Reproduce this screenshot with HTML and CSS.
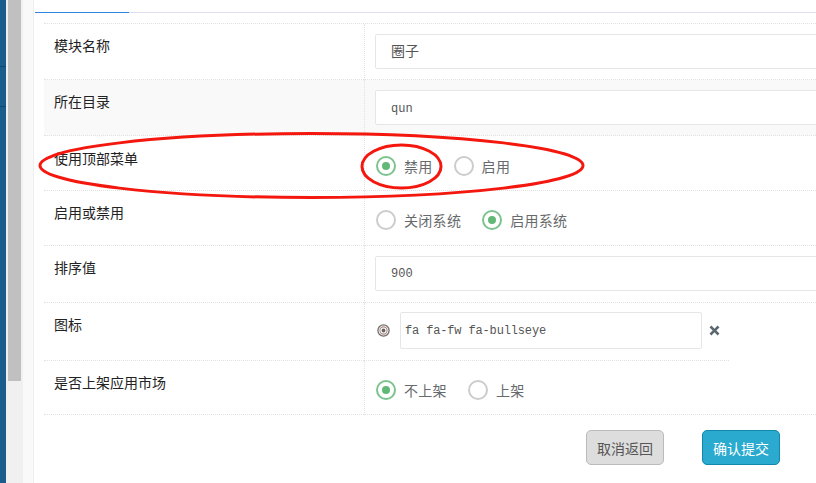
FILE: index.html
```html
<!DOCTYPE html>
<html lang="zh-CN">
<head>
    <meta charset="UTF-8">
    <meta name="viewport" content="width=device-width, initial-scale=1.0">
    <title>模块设置</title>
    <link rel="stylesheet" href="styles.css">
</head>
<body>
    <div class="page">
        <div class="sidebar">
            <div class="nav-strip">
                <div class="nav-item nav-item-first"></div>
                <div class="nav-item nav-item-second"></div>
            </div>
            <div class="scrollbar"><div class="scroll-thumb"></div></div>
        </div>
        <div class="gutter"></div>
        <div class="main">
            <div class="tabs"><div class="tab-active"></div></div>
            <form class="form-table">
                <div class="row row-1">
                    <div class="row-label">模块名称</div>
                    <div class="row-field"><input class="text-input text-input-cjk" type="text" value="圈子"></div>
                </div>
                <div class="row row-2 row-shaded">
                    <div class="row-label">所在目录</div>
                    <div class="row-field"><input class="text-input text-input-low" type="text" value="qun"></div>
                </div>
                <div class="row row-3">
                    <div class="row-label">使用顶部菜单</div>
                    <div class="row-field radios">
                        <label class="radio"><span class="radio-mark checked"></span>禁用</label>
                        <label class="radio"><span class="radio-mark"></span>启用</label>
                    </div>
                </div>
                <div class="row row-4">
                    <div class="row-label">启用或禁用</div>
                    <div class="row-field radios">
                        <label class="radio"><span class="radio-mark"></span>关闭系统</label>
                        <label class="radio"><span class="radio-mark checked"></span>启用系统</label>
                    </div>
                </div>
                <div class="row row-5">
                    <div class="row-label">排序值</div>
                    <div class="row-field"><input class="text-input" type="text" value="900"></div>
                </div>
                <div class="row row-6">
                    <div class="row-label">图标</div>
                    <div class="row-field icon-field">
                        <svg class="icon-preview" viewBox="0 0 13 13" width="13" height="13">
                            <circle cx="6.5" cy="6.5" r="5.6" fill="none" stroke="#6f6f6f" stroke-width="1.3"/>
                            <circle cx="6.5" cy="6.5" r="3.6" fill="none" stroke="#b08a80" stroke-width="1.1"/>
                            <circle cx="6.5" cy="6.5" r="1.9" fill="#666"/>
                        </svg>
                        <input class="text-input icon-input" type="text" value="fa fa-fw fa-bullseye">
                        <svg class="icon-clear" viewBox="0 0 12 12" width="11" height="11">
                            <path d="M2.6 0.6 L6 4 L9.4 0.6 L11.4 2.6 L8 6 L11.4 9.4 L9.4 11.4 L6 8 L2.6 11.4 L0.6 9.4 L4 6 L0.6 2.6 Z" fill="#5a6670"/>
                        </svg>
                    </div>
                </div>
                <div class="row row-7">
                    <div class="row-label">是否上架应用市场</div>
                    <div class="row-field radios">
                        <label class="radio"><span class="radio-mark checked"></span>不上架</label>
                        <label class="radio"><span class="radio-mark"></span>上架</label>
                    </div>
                </div>
                <div class="actions">
                    <button class="btn btn-cancel" type="button">取消返回</button>
                    <button class="btn btn-submit" type="submit">确认提交</button>
                </div>
            </form>
        </div>
        <!-- 截图上的红圈标注 -->
        <svg class="markup" viewBox="0 0 816 483" width="816" height="483">
            <ellipse cx="311.5" cy="165.5" rx="271.5" ry="32" fill="none" stroke="#f4170e" stroke-width="3"/>
            <ellipse cx="401.5" cy="166.5" rx="39.5" ry="21.5" fill="none" stroke="#f4170e" stroke-width="3"/>
        </svg>
    </div>
</body>
</html>
```

FILE: styles.css
```css
* {
    box-sizing: border-box;
}
html, body {
    margin: 0;
    padding: 0;
    height: 100%;
    overflow: hidden;
}
body {
    font-family: "Liberation Sans", "Noto Sans CJK SC", sans-serif;
    font-size: 14px;
    background-color: #fff;
}
.page {
    position: relative;
    display: flex;
    width: 816px;
    height: 483px;
    overflow: hidden;
}
.sidebar {
    display: flex;
    flex: none;
    width: 23px;
}
.nav-strip {
    width: 6px;
    background-color: #1a5c8c;
}
.nav-item {
    border-bottom: 1px solid #12476f;
}
.nav-item-first {
    height: 67px;
}
.nav-item-second {
    height: 40px;
}
.scrollbar {
    flex: 1;
    padding-left: 2px;
    background-color: #f0f0f0;
}
.scroll-thumb {
    width: 13px;
    height: 381px;
    background-color: #c0c0c0;
}
.gutter {
    flex: none;
    width: 11px;
    background-color: #f9f9f9;
    border-right: 1px solid #eee;
}
.main {
    flex: none;
    width: 900px;
    padding-left: 1px;
}
.tabs {
    height: 13px;
    border-bottom: 1px solid #dde;
}
.tab-active {
    width: 94px;
    height: 13px;
    border-bottom: 1px solid #2f86e0;
}
.form-table {
    margin: 10px 0 0 9px;
    border-top: 1px dotted #e2e2e2;
}
.row {
    display: flex;
}
.row-shaded {
    background-color: #f9f9f9;
}
.row-1 { height: 56px; }
.row-2 { height: 56px; }
.row-3 { height: 55px; }
.row-4 { height: 55px; }
.row-5 { height: 57px; }
.row-6 { height: 58px; }
.row-7 { height: 54px; }
.row-label {
    flex: none;
    width: 320px;
    padding: 13px 0 0 10px;
    color: #222;
    line-height: 18px;
    border-bottom: 1px dotted #e2e2e2;
}
.row-3 .row-label {
    padding-top: 14px;
}
.row-field {
    flex: 1;
    padding: 10px 0 0 10px;
    border-left: 1px dotted #e2e2e2;
    border-bottom: 1px dotted #e2e2e2;
}
.text-input {
    display: block;
    width: 520px;
    height: 35px;
    padding: 0 15px;
    font-family: "Liberation Mono", "Noto Sans CJK SC", monospace;
    font-size: 12px;
    color: #555;
    background-color: #fff;
    border: 1px solid #e5e6e7;
    border-radius: 2px;
    outline: none;
}
.text-input-cjk {
    padding-bottom: 3px;
    font-size: 14px;
}
.text-input-low {
    padding-top: 3px;
}
.radios {
    display: flex;
    align-items: center;
    gap: 21px;
    padding-top: 4px;
    padding-left: 11px;
}
.row-3 .radios {
    padding-top: 5px;
}
.radio {
    display: flex;
    align-items: center;
    gap: 8px;
    color: #676a6c;
    letter-spacing: 0.3px;
}
.radio-mark {
    position: relative;
    width: 20px;
    height: 20px;
    background-color: #fff;
    border: 2px solid #ccc;
    border-radius: 50%;
}
.radio-mark.checked {
    border-color: #7cc48f;
}
.radio-mark.checked::after {
    content: "";
    position: absolute;
    top: 4px;
    left: 4px;
    width: 8px;
    height: 8px;
    background-color: #62b977;
    border-radius: 50%;
}
.icon-field {
    flex: none;
    display: flex;
    align-items: flex-start;
    width: 365px;
    padding-top: 9px;
}
.icon-preview {
    flex: none;
    margin: 12px 10px 0 2px;
}
.icon-input {
    flex: none;
    width: 302px;
    height: 37px;
    padding: 0 4px;
    letter-spacing: -0.15px;
}
.icon-clear {
    flex: none;
    margin: 13px 0 0 7px;
}
.actions {
    display: flex;
    gap: 38px;
    padding: 15px 0 0 542px;
}
.btn {
    width: 78px;
    height: 35px;
    padding: 0;
    font-family: "Liberation Sans", "Noto Sans CJK SC", sans-serif;
    font-size: 14px;
    border-radius: 5px;
    cursor: pointer;
}
.btn-cancel {
    color: #555;
    background-color: #ddd;
    border: 1px solid #bbb;
}
.btn-submit {
    color: #fff;
    background-color: #2aaacf;
    border: 1px solid #1288ab;
}
.markup {
    position: absolute;
    top: 0;
    left: 0;
    pointer-events: none;
}
```
